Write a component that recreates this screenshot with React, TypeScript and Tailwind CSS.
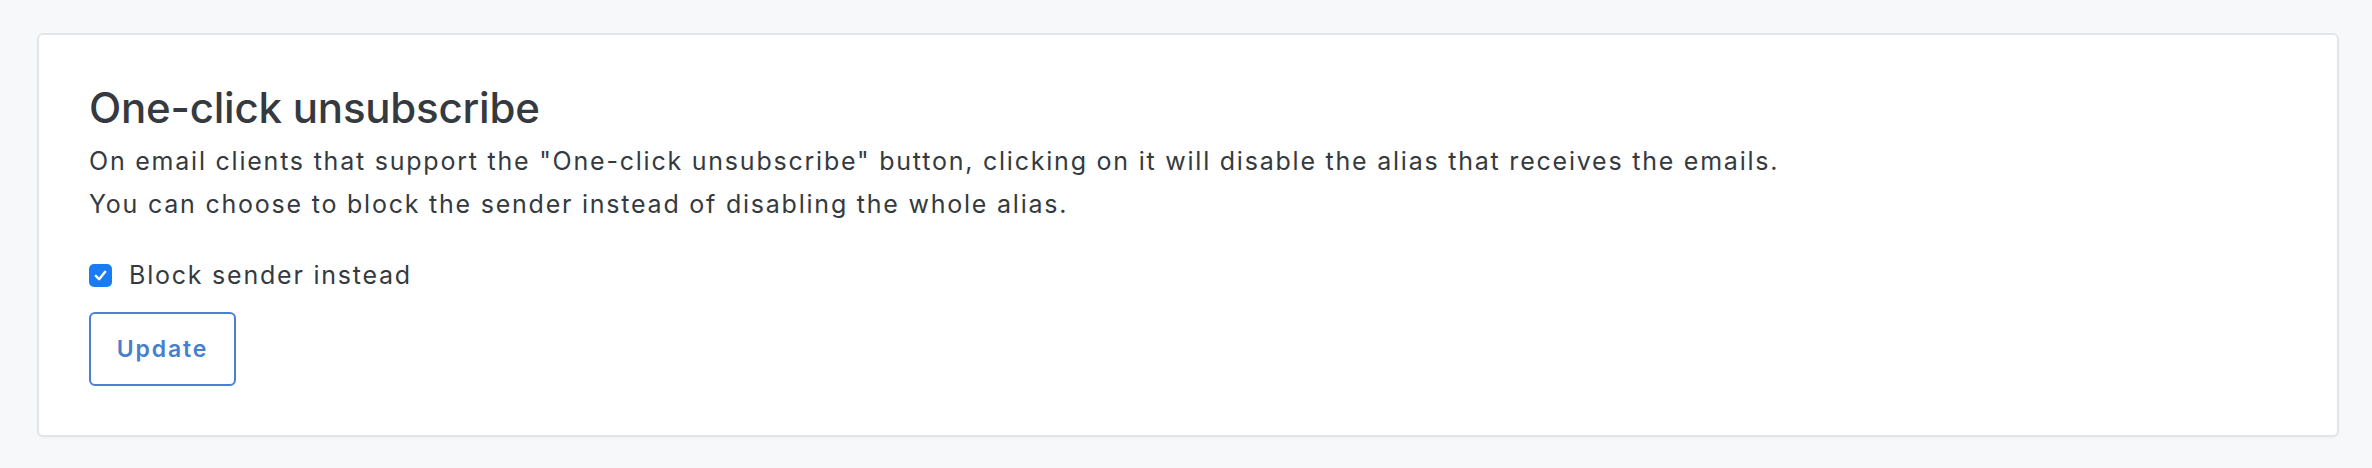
import React from 'react';

const App: React.FC = () => {
  return (
    <div className="min-h-[468px] w-full bg-[#f7f8fa] pt-[33px] pb-[32px] pl-[37px] pr-[33px] font-['Inter','Noto_Sans',sans-serif] text-[#353a40]">
      <div className="rounded-[6px] border-2 border-[#e1e5ec] bg-white pl-[50px] pr-[50px] pt-[44px] pb-[49px] shadow-[0_1px_2px_rgba(0,0,0,0.04)]">
        <h3 className="text-[42px] font-medium leading-[58px] tracking-[-0.005em]">One-click unsubscribe</h3>
        <div className="mt-[3px] text-[25px] leading-[43px] tracking-[0.071em]">
          On email clients that support the "One-click unsubscribe" button, clicking on it will disable the alias that receives the emails.
          <br />
          You can choose to block the sender instead of disabling the whole alias.
        </div>
        <label className="mt-[31px] flex items-center gap-[17px] text-[25px] leading-[36px] tracking-[0.071em]">
          <span className="flex h-[23px] w-[23px] items-center justify-center rounded-[5px] bg-[#1a7cf5]">
            <svg width="15" height="15" viewBox="0 0 16 16" fill="none">
              <path d="M3 8.5 L6.5 12 L13 4" stroke="white" strokeWidth="2.6" strokeLinecap="round" strokeLinejoin="round" />
            </svg>
          </span>
          Block sender instead
        </label>
        <button className="mt-[19px] flex h-[74px] w-[147px] items-center justify-center rounded-[6px] border-2 border-[#4a80d3] bg-white text-[23px] font-semibold tracking-[0.08em] text-[#467fcf]">
          Update
        </button>
      </div>
    </div>
  );
};

export default App;
